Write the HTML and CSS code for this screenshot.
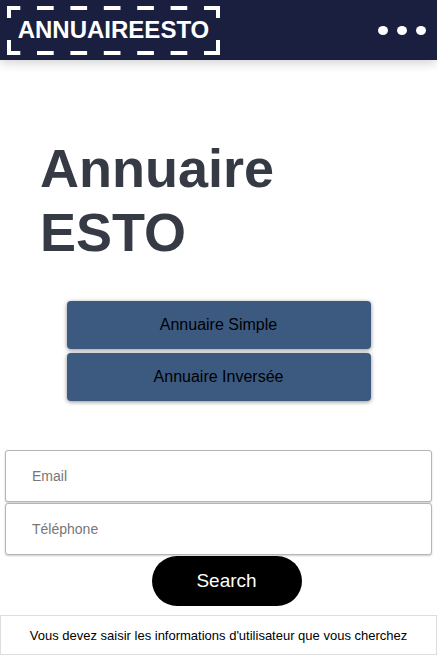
FILE: index.html
```html
<!DOCTYPE html>
<html lang="fr">
<head>
<meta charset="utf-8">
<title>Annuaire ESTO</title>
<link rel="stylesheet" href="styles.css">
</head>
<body>
<header class="topbar">
  <div class="logo">
    <svg class="logo-frame" width="213" height="49" viewBox="0 0 213 49" aria-hidden="true">
      <g fill="none" stroke="#fff" stroke-width="4">
        <path d="M0 2H213M0 47H213" stroke-dasharray="16.7 16.7" stroke-dashoffset="3.4"/>
        <path d="M2 0V49M211 0V49" stroke-dasharray="12 22 15 0"/>
      </g>
    </svg>
    <span class="logo-text">ANNUAIREESTO</span>
  </div>
  <div class="menu"><span class="dot"></span><span class="dot"></span><span class="dot"></span></div>
</header>
<main>
  <h1 class="title">Annuaire<br>ESTO</h1>
  <div class="choices">
    <button class="choice">Annuaire Simple</button>
    <button class="choice">Annuaire Inversée</button>
  </div>
  <form class="search">
    <input class="field" type="text" placeholder="Email">
    <input class="field" type="text" placeholder="Téléphone">
    <button class="search-btn" type="button">Search</button>
  </form>
  <div class="message">Vous devez saisir les informations d'utilisateur que vous cherchez</div>
</main>
</body>
</html>
```
FILE: styles.css
```css
* { box-sizing: border-box; }
body {
  margin: 0;
  font-family: "Liberation Sans", Arial, sans-serif;
  background: #fff;
  width: 437px;
}
.topbar {
  height: 60px;
  background: #1b1f3f;
  display: flex;
  align-items: center;
  justify-content: space-between;
  padding: 0 11px 0 7px;
  box-shadow: 0 3px 10px rgba(0,0,0,0.18);
}
.logo {
  position: relative;
  width: 213px;
  height: 49px;
  color: #fff;
  font-weight: bold;
  font-size: 24px;
  display: flex;
  align-items: center;
  justify-content: center;
}
.logo-frame {
  position: absolute;
  left: 0;
  top: 0;
}
.menu { display: flex; gap: 9px; }
.dot {
  width: 10px;
  height: 9px;
  border-radius: 50%;
  background: #fff;
}
main { display: flex; flex-direction: column; }
.title {
  margin: 76px 0 0 40px;
  font-size: 54px;
  line-height: 64px;
  font-weight: bold;
  color: #363a45;
}
.choices {
  margin-top: 37px;
  display: flex;
  flex-direction: column;
  align-items: center;
  gap: 4px;
}
.choice {
  width: 304px;
  height: 48px;
  background: #3c5a80;
  border: none;
  border-radius: 4px;
  box-shadow: 0 1px 4px rgba(0,0,0,0.45);
  font-family: inherit;
  font-size: 16px;
  color: #000;
}
.search {
  margin: 49px 5px 0;
  display: flex;
  flex-direction: column;
  align-items: center;
  gap: 1px;
}
.field {
  width: 100%;
  height: 52px;
  border: 1px solid #b5b5b5;
  border-radius: 3px;
  box-shadow: 0 1px 2px rgba(0,0,0,0.2);
  padding: 0 0 0 26px;
  font-family: inherit;
  font-size: 14px;
  color: #333;
}
.field::placeholder { color: #777; }
.search-btn {
  width: 150px;
  height: 50px;
  border: none;
  border-radius: 25px;
  background: #000;
  color: #fff;
  font-family: inherit;
  font-size: 19px;
  margin-left: 16px;
}
.message {
  margin-top: 9px;
  height: 40px;
  border: 1px solid #ddd;
  display: flex;
  align-items: center;
  justify-content: center;
  font-size: 13px;
  color: #000;
}
```
